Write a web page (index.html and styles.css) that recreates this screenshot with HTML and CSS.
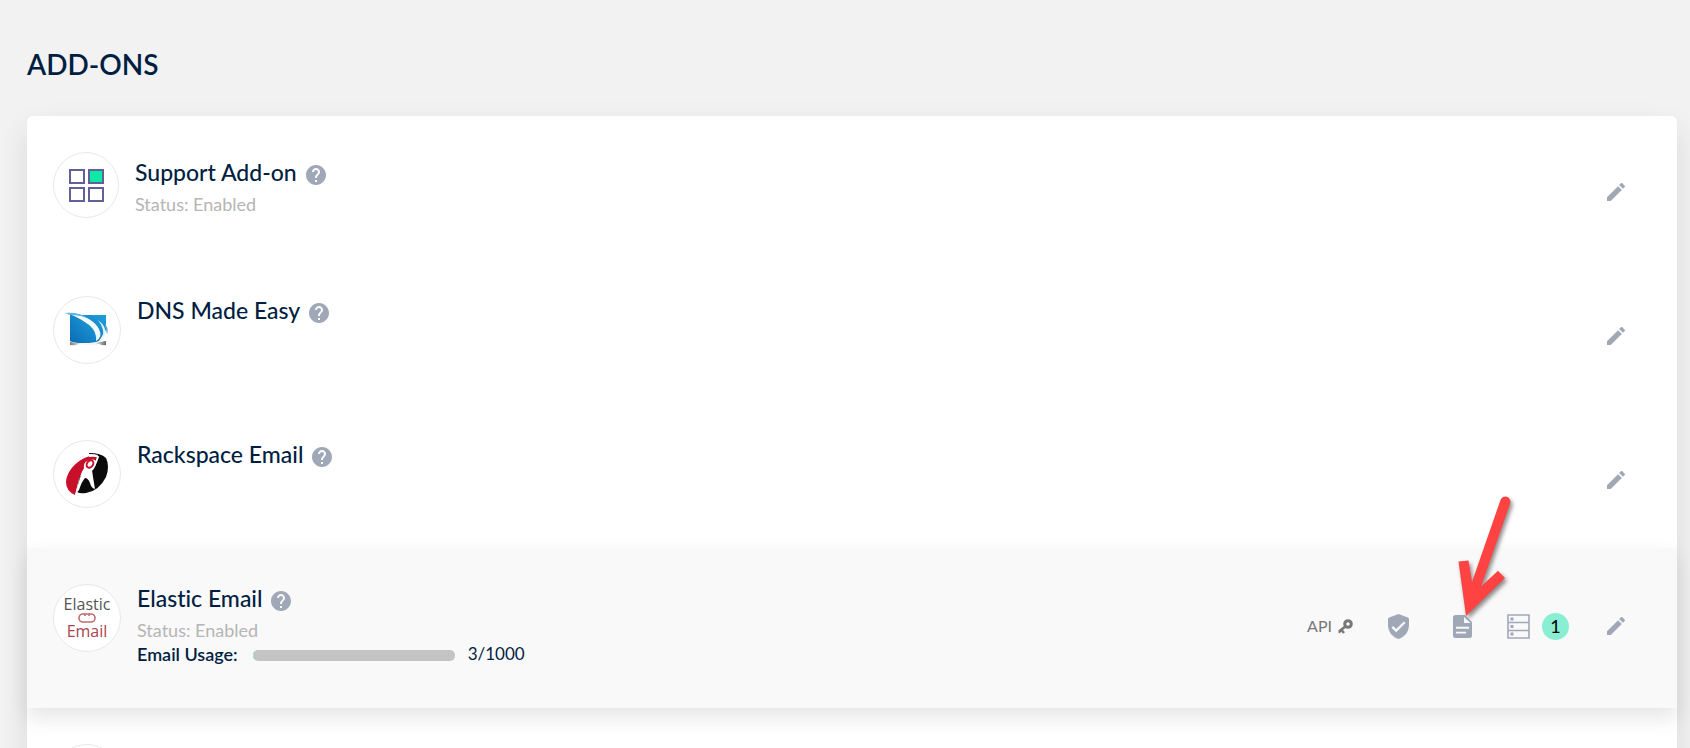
FILE: index.html
```html
<!DOCTYPE html>
<html lang="en">
<head>
<meta charset="UTF-8">
<meta name="viewport" content="width=device-width, initial-scale=1.0">
<title>Add-ons</title>
<link rel="stylesheet" href="styles.css">
</head>
<body>
<!-- shared icons -->
<svg class="sprite" aria-hidden="true">
  <symbol id="help" viewBox="2 2 20 20">
    <path d="M12 2C6.48 2 2 6.48 2 12s4.48 10 10 10 10-4.48 10-10S17.52 2 12 2zm1 17h-2v-2h2v2zm2.07-7.75l-.9.92C13.45 12.9 13 13.5 13 15h-2v-.5c0-1.1.45-2.1 1.17-2.83l1.24-1.26c.37-.36.59-.86.59-1.41 0-1.1-.9-2-2-2s-2 .9-2 2H8c0-2.21 1.79-4 4-4s4 1.79 4 4c0 .88-.36 1.68-.93 2.25z"/>
  </symbol>
  <symbol id="pencil" viewBox="3 3 18 18">
    <path d="M3 17.25V21h3.75L17.81 9.94l-3.75-3.75L3 17.25zM20.71 7.04c.39-.39.39-1.02 0-1.41l-2.34-2.34c-.39-.39-1.02-.39-1.41 0l-1.83 1.83 3.75 3.75 1.83-1.83z"/>
  </symbol>
</svg>

<main class="page">
  <h1>ADD-ONS</h1>
  <div class="card">

    <section class="addon addon-first">
      <div class="logo">
        <svg width="35" height="33" viewBox="0 0 35 33">
          <g fill="#fff" stroke="#625f9b" stroke-width="2">
            <rect x="1" y="1" width="14" height="13"/>
            <rect x="20" y="1" width="14" height="13" fill="#0ceaa5"/>
            <rect x="1" y="19" width="14" height="13"/>
            <rect x="20" y="19" width="14" height="13"/>
          </g>
        </svg>
      </div>
      <div class="info">
        <div class="title">
          <h2>Support Add-on</h2>
          <button class="icon-btn" aria-label="Help"><svg width="20" height="20"><use href="#help"/></svg></button>
        </div>
        <p class="status">Status: Enabled</p>
      </div>
      <div class="actions">
        <button class="icon-btn" aria-label="Edit"><svg width="18" height="18"><use href="#pencil"/></svg></button>
      </div>
    </section>

    <section class="addon">
      <div class="logo">
        <svg width="44" height="36" viewBox="0 0 44 36">
          <defs>
            <linearGradient id="dnsBlue" x1="0" y1="1" x2="1" y2="0">
              <stop offset="0" stop-color="#0a6cb4"/>
              <stop offset="1" stop-color="#1f9edb"/>
            </linearGradient>
            <linearGradient id="dnsGrey" x1="0" x2="1">
              <stop offset="0" stop-color="#777"/>
              <stop offset=".3" stop-color="#f4f4f4"/>
              <stop offset=".7" stop-color="#f4f4f4"/>
              <stop offset="1" stop-color="#666"/>
            </linearGradient>
          </defs>
          <path d="M5 30q16 3 36-1v4q-3 1-7-1-10 2-20 0-4 2-9 1z" fill="url(#dnsGrey)"/>
          <path d="M5 3h36v15l-7 11q-5 2-15 2-8 0-14-2z" fill="url(#dnsBlue)"/>
          <path d="M4 2Q26 3 34 17q4 8-3 12 1-7-6-13Q17 6 4 2z" fill="#f2fafe"/>
          <path d="M5 4q16 4 23 13 4 6 2 11-5 3-12 3-8 0-13-2z" fill="url(#dnsBlue)"/>
          <path d="M0 1q14-1 23 5-8-3-18-3z" fill="#5fb4e0"/>
          <path d="M33 8q9 7 7 14-1 4-5 7 4-6 3-11-1-5-5-10z" fill="#e4f3fb"/>
          <path d="M40 12q4 5 2 10-1-5-2-7z" fill="#4fa9da"/>
        </svg>
      </div>
      <div class="info">
        <div class="title">
          <h2>DNS Made Easy</h2>
          <button class="icon-btn" aria-label="Help"><svg width="20" height="20"><use href="#help"/></svg></button>
        </div>
      </div>
      <div class="actions">
        <button class="icon-btn" aria-label="Edit"><svg width="18" height="18"><use href="#pencil"/></svg></button>
      </div>
    </section>

    <section class="addon">
      <div class="logo">
        <svg width="44" height="44" viewBox="0 0 44 44">
          <path d="M25 4C13 7 2 18 1 30q0 9 9 13l4-16 7-15 12-2V4q-4-1-8 0z" fill="#c8102a"/>
          <path d="M24 1q12 0 17 5 4 8 0 19-7 14-20 16-6 1-9-1 1-9 3-16l4-2 8-8 6-11q-3-1-9-1z" fill="#0b0b0b"/>
          <path d="M10 43l5-17q2-8 4-9-1-6 3-8 7-3 9 0 1 5-4 9l1 7q1 6 2 12-4-1-5-6-2-5-5-5-3 3-6 12z" fill="#fff"/>
          <path d="M24 4q6-1 9 1l-2 5-4 8" fill="none" stroke="#fff" stroke-width="2"/>
          <ellipse cx="25" cy="12" rx="3" ry="4" transform="rotate(35 25 12)" fill="#fff" stroke="#c8102a" stroke-width="2"/>
        </svg>
      </div>
      <div class="info">
        <div class="title">
          <h2>Rackspace Email</h2>
          <button class="icon-btn" aria-label="Help"><svg width="20" height="20"><use href="#help"/></svg></button>
        </div>
      </div>
      <div class="actions">
        <button class="icon-btn" aria-label="Edit"><svg width="18" height="18"><use href="#pencil"/></svg></button>
      </div>
    </section>

    <section class="addon addon-active">
      <div class="logo logo-elastic">
        <span class="elastic">Elastic</span>
        <svg width="18" height="10" viewBox="0 0 18 10">
          <path d="M7 1H5a4 4 0 0 0 0 8h8a4 4 0 0 0 0-8h-2M7 0v3M11 0v3M8 1h2" fill="none" stroke="#c46a70" stroke-width="1.6"/>
        </svg>
        <span class="email">Email</span>
      </div>
      <div class="info">
        <div class="title">
          <h2>Elastic Email</h2>
          <button class="icon-btn" aria-label="Help"><svg width="20" height="20"><use href="#help"/></svg></button>
        </div>
        <p class="status">Status: Enabled</p>
        <div class="usage">
          <label for="emailUsage">Email Usage:</label>
          <progress id="emailUsage" value="3" max="1000"></progress>
          <span class="count">3/1000</span>
        </div>
      </div>
      <div class="actions">
        <a class="api" href="#">API
          <svg width="15" height="15" viewBox="0 0 15 15">
            <circle cx="10" cy="5" r="3.3" fill="none" stroke="#777" stroke-width="3"/>
            <path d="M8 7l-7 5.500M3 10.500l3 3.500M1 12l1.500 1.500" fill="none" stroke="#777" stroke-width="2.600"/>
          </svg>
        </a>
        <button class="icon-btn" aria-label="Verify">
          <svg width="21" height="25" viewBox="3 1 18 22" preserveAspectRatio="none">
            <path d="M12 1L4 4q-1 .4-1 1.500V11c0 5.550 3.840 10.740 9 12 5.160-1.260 9-6.450 9-12V5.500Q21 4.400 20 4zM10 17l-4-4 1.410-1.410L10 14.170l6.590-6.590L18 9z"/>
          </svg>
        </button>
        <div class="doc">
          <button class="icon-btn" aria-label="Logs">
            <svg width="19" height="23" viewBox="4 2 16 20" preserveAspectRatio="none">
              <path d="M14 2H6c-1.100 0-2 .9-2 2v16c0 1.100.9 2 2 2h12c1.100 0 2-.9 2-2V8zM15 18H6.500v-1.500H15zm2.500-4h-11v-1.700h11zM13.300 9V3.500L18.800 9z"/>
            </svg>
          </button>
          <svg class="arrow" width="60" height="126" viewBox="0 0 60 126">
            <path d="M46.500 6a5 5 0 0 1 9.700 3.300L27 92.500 44 76.800l7 7.200L12 122 4.500 67.500l10-1L18 88z" fill="#ff4242"/>
          </svg>
        </div>
        <div class="servers">
          <button class="icon-btn" aria-label="Servers">
            <svg width="24" height="25" viewBox="0 0 24 25">
              <path d="M1 1h21v23H1zM1 8.500h21M1 16.500h21" fill="none" stroke="#a0a8b8" stroke-width="1.600"/>
              <path d="M3.500 3.500h3v3h-3zM3.500 11h3v3h-3zM3.500 18.500h3v3h-3z"/>
            </svg>
          </button>
          <span class="badge">1</span>
        </div>
        <button class="icon-btn" aria-label="Edit"><svg width="18" height="18"><use href="#pencil"/></svg></button>
      </div>
    </section>

    <section class="addon">
      <div class="logo"></div>
    </section>

  </div>
</main>
</body>
</html>
```
FILE: styles.css
```css
* {
  box-sizing: border-box;
}
body {
  margin: 0;
  height: 100vh;
  overflow: hidden;
  background: #f2f2f2;
  color: #001e42;
  font-family: Lato, "Liberation Sans", sans-serif;
  font-size: 18px;
  line-height: 24px;
  font-variant-ligatures: none;
}
.sprite {
  position: absolute;
  width: 0;
  height: 0;
}
.page {
  padding: 46px 13px 0 27px;
}
h1, h2, p {
  margin: 0;
}
h1 {
  font-size: 28px;
  line-height: 36px;
  font-weight: 600;
  margin-bottom: 34px;
}
.card {
  background: #fff;
  border-radius: 6px;
  box-shadow: 0 12px 30px rgba(0, 0, 0, 0.1);
}
.addon {
  display: flex;
  align-items: flex-start;
  min-height: 144px;
  padding: 36px 52px 24px 26px;
}
.addon-active {
  min-height: 160px;
  background: #f9f9f9;
  box-shadow: 0 10px 20px rgba(0, 0, 0, 0.1);
}
.logo {
  display: flex;
  flex: none;
  align-items: center;
  justify-content: center;
  width: 68px;
  height: 68px;
  border: 1px solid #e8e8e8;
  border-radius: 50%;
  background: #fff;
}
.addon-first .logo {
  width: 66px;
  height: 66px;
}
.logo-elastic {
  flex-direction: column;
  font-family: "Open Sans", sans-serif;
  font-size: 16px;
  line-height: 17px;
}
.elastic {
  color: #555;
}
.email {
  color: #a8434d;
}
.info {
  flex: 1;
  padding-left: 16px;
}
.addon-first .info {
  padding-top: 6px;
}
.title {
  display: flex;
  align-items: center;
  gap: 9px;
}
.title .icon-btn {
  padding-top: 6px;
}
h2 {
  font-size: 23px;
  line-height: 28px;
  font-weight: 500;
}
.status {
  color: #b5b5b5;
  margin-top: 6px;
}
.usage {
  display: flex;
  align-items: center;
}
.usage label {
  font-weight: 600;
}
.count {
  font-size: 17px;
}
progress {
  appearance: none;
  width: 202px;
  height: 11px;
  margin: 2px 13px 0 15px;
  border: 0;
  border-radius: 5px;
  overflow: hidden;
  background: #c4c4c4;
}
progress::-webkit-progress-bar {
  background: #c4c4c4;
}
progress::-webkit-progress-value {
  background: #8aeed3;
}
.icon-btn {
  display: block;
  padding: 0;
  border: 0;
  background: none;
  fill: #a0a8b8;
  cursor: pointer;
}
.icon-btn svg {
  display: block;
}
.actions {
  display: flex;
  align-items: center;
  gap: 35px;
  height: 80px;
}
.addon-active .actions {
  height: 84px;
}
.api {
  display: flex;
  align-items: center;
  gap: 6px;
  color: #777;
  font-size: 16px;
  text-decoration: none;
}
.doc {
  position: relative;
  margin-left: 9px;
}
/* pointer drawn over the row, tip on the log icon */
.arrow {
  position: absolute;
  left: 1px;
  bottom: 18px;
  overflow: visible;
  filter: drop-shadow(2px 3px 2px rgba(0, 0, 0, 0.45));
  pointer-events: none;
}
.servers {
  display: flex;
  align-items: center;
  gap: 11px;
  margin-right: 3px;
}
.badge {
  width: 27px;
  height: 27px;
  border-radius: 50%;
  background: #8aeed3;
  color: #000;
  line-height: 26px;
  text-align: center;
}
```
